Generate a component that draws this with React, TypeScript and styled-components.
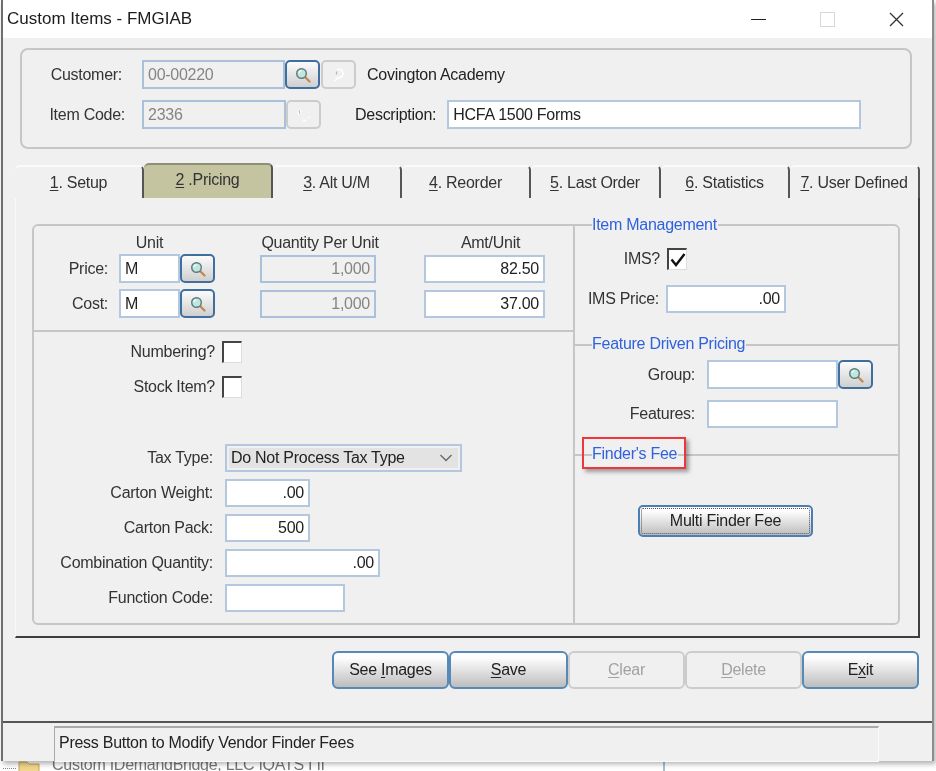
import React from "react";
import styled, { createGlobalStyle } from "styled-components";

const GlobalStyle = createGlobalStyle`
  html, body {
    margin: 0;
    padding: 0;
    background: #fff;
  }
  * {
    box-sizing: border-box;
  }
`;

const SearchIcon = () => (
  <svg width="18" height="18" viewBox="0 0 18 18">
    <line x1="10.5" y1="10.5" x2="15.5" y2="15.5" stroke="#c08a52" strokeWidth="2.4" strokeLinecap="round" />
    <circle cx="7.5" cy="7.500" r="4.800" fill="#bfe6e0" stroke="#5d7a7a" strokeWidth="1.400" />
    <path d="M5 7a3 3 0 0 1 2.500-2.400" fill="none" stroke="#fff" strokeWidth="1.200" />
  </svg>
);

const FadedSearchIcon = () => (
  <svg width="18" height="18" viewBox="0 0 18 18">
    <path d="M7 3.500a4.600 4.600 0 0 1 6 4.500 4.600 4.600 0 0 1-5 3.600M8 11.500 4.500 15" fill="none" stroke="#fff" strokeWidth="1.600" />
    <path d="M6.500 5.500v3" fill="none" stroke="#b5b5b5" strokeWidth="1.200" />
  </svg>
);

const FadedDots = () => (
  <svg width="18" height="18" viewBox="0 0 18 18">
    <path d="M4 5.500h3M3.500 6v2.500M13.500 11l1 1M8 14.500h3" fill="none" stroke="#fff" strokeWidth="1.500" />
    <path d="M4.500 4.500v3" fill="none" stroke="#b8b8b8" strokeWidth="1" />
  </svg>
);

const Chevron = () => (
  <svg width="14" height="8" viewBox="0 0 14 8">
    <path d="M1.500 1 7 6.500 12.500 1" fill="none" stroke="#666" strokeWidth="1.300" />
  </svg>
);

const FolderIcon = () => (
  <svg width="22" height="14" viewBox="0 0 22 14">
    <path d="M1 1h8l2 2h10v11H1z" fill="#f1d58c" stroke="#c9a65a" strokeWidth="1" />
  </svg>
);

const Page = styled.div`
  width: 936px;
  height: 771px;
  overflow: hidden;
  position: relative;
  background: #fff;
  font-family: "Liberation Sans", Arial, sans-serif;
  font-size: 16px;
  letter-spacing: -0.27px;
  color: #222;
  filter: blur(0.4px);
`;

const Window = styled.div`
  width: 933px;
  height: 761px;
  margin-left: 1px;
  border-left: 2px solid #6e6e6e;
  border-right: 2px solid #8c8c8c;
  background: #f0f0f0;
  display: flex;
  flex-direction: column;
  box-shadow: 2px 3px 5px rgba(0, 0, 0, 0.3);
  position: relative;
  z-index: 1;
`;

const TitleBar = styled.div`
  height: 38px;
  flex: none;
  background: #fff;
  display: flex;
  align-items: center;
  padding-left: 4px;
  font-size: 17px;
  letter-spacing: 0;
  color: #1c1c1c;
`;

const TitleText = styled.span`
  flex: 1;
`;

const WindowControl = styled.div`
  width: 15px;
  height: 15px;
  flex: none;
  display: flex;
  align-items: center;
  justify-content: center;
`;

const MinLine = styled(WindowControl)`
  margin-right: 54px;
  &::before {
    content: "";
    width: 15px;
    height: 1px;
    background: #222;
  }
`;

const MaxBox = styled(WindowControl)`
  margin-right: 54px;
  border: 1px solid #d8d8d8;
`;

const CloseBox = styled(WindowControl)`
  margin-right: 28px;
`;

const TopGroup = styled.div`
  margin: 10px 0 0 17px;
  width: 892px;
  height: 101px;
  flex: none;
  border: 2px solid #c6c6c6;
  border-radius: 8px;
  padding: 10px 0 0 0;
  display: flex;
  flex-direction: column;
  gap: 11px;
`;

const Row = styled.div<{ $labelWidth: number; $gap?: number }>`
  display: grid;
  grid-template-columns: ${(p) => p.$labelWidth}px auto;
  column-gap: ${(p) => p.$gap ?? 11}px;
  justify-content: start;
  align-items: center;
  min-height: 28px;
`;

const Label = styled.label`
  text-align: right;
  white-space: nowrap;
  color: #333;
`;

const Cluster = styled.div`
  display: flex;
  align-items: stretch;
`;

const Input = styled.input<{ $width: number; $right?: boolean; $off?: boolean }>`
  width: ${(p) => p.$width}px;
  height: 28px;
  flex: none;
  border: 2px solid ${(p) => (p.$off ? "#a9c1da" : "#b3c8de")};
  border-radius: 0;
  outline: none;
  background: ${(p) => (p.$off ? "#f0f0f0" : "#fff")};
  color: ${(p) => (p.$off ? "#858585" : "#222")};
  font: inherit;
  letter-spacing: inherit;
  padding: 0 4px;
  text-align: ${(p) => (p.$right ? "right" : "left")};
`;

const ClusterInput = styled(Input)`
  height: auto;
`;

const SearchButton = styled.button`
  width: 35px;
  height: 29px;
  flex: none;
  padding: 0;
  display: flex;
  align-items: center;
  justify-content: center;
  border: 2px solid #3f6f9f;
  border-radius: 5px;
  background: linear-gradient(#fbfbfb, #cfcfcf);
`;

const OffButton = styled.button<{ $flush?: boolean }>`
  width: 35px;
  height: 29px;
  flex: none;
  margin-left: ${(p) => (p.$flush ? 0 : 1)}px;
  padding: 0;
  display: flex;
  align-items: center;
  justify-content: center;
  border: 2px solid #cccccc;
  border-radius: 5px;
  background: #f0f0f0;
`;

const Plain = styled.span<{ $left: number }>`
  margin-left: ${(p) => p.$left}px;
  white-space: nowrap;
  display: flex;
  align-items: center;
`;

const DescriptionInput = styled(ClusterInput)`
  margin-left: 11px;
`;

const TabStrip = styled.div`
  display: flex;
  align-items: flex-end;
  height: 35px;
  flex: none;
  margin: 14px 0 0 12px;
`;

const Tab = styled.div<{ $active?: boolean; $width: number }>`
  width: ${(p) => p.$width}px;
  height: ${(p) => (p.$active ? 35 : 33)}px;
  flex: none;
  display: flex;
  align-items: center;
  justify-content: center;
  padding-top: ${(p) => (p.$active ? 0 : 1)}px;
  padding-bottom: ${(p) => (p.$active ? 4 : 0)}px;
  background: ${(p) => (p.$active ? "#c4c4a0" : "#f0f0f0")};
  border-top: 2px solid ${(p) => (p.$active ? "#8f8f78" : "#fafafa")};
  border-right: 2px solid #555;
  border-top-right-radius: 5px;
  border-top-left-radius: 5px;
  white-space: nowrap;
  color: #333;
`;

const TabPanel = styled.div`
  width: 905px;
  height: 440px;
  flex: none;
  margin-left: 12px;
  border-left: 1px solid #fafafa;
  border-right: 2px solid #3f3f3f;
  border-bottom: 2px solid #3f3f3f;
  padding: 26px 0 0 16px;
`;

const InnerGroup = styled.div`
  width: 868px;
  height: 401px;
  display: grid;
  grid-template-columns: 539px 325px;
  border: 2px solid #c6c6c6;
  border-radius: 6px;
`;

const LeftColumn = styled.div`
  display: flex;
  flex-direction: column;
`;

const PriceGrid = styled.div`
  height: 106px;
  flex: none;
  border-bottom: 2px solid #c6c6c6;
  display: grid;
  grid-template-columns: 85px 141px 164px 121px;
  grid-template-rows: 22px auto auto;
  align-content: start;
  padding-top: 6px;
  align-items: center;
`;

const PriceLabel = styled(Label)<{ $low?: boolean }>`
  padding-right: 11px;
  margin-top: ${(p) => (p.$low ? 6 : 0)}px;
`;

const ColumnHead = styled.div<{ $width: number; $shift?: number }>`
  width: ${(p) => p.$width}px;
  white-space: nowrap;
  color: #333;
  display: flex;
  justify-content: center;
  transform: translateX(${(p) => p.$shift ?? 0}px);
`;

const CostSlot = styled.div`
  margin-top: 6px;
`;

const FormStack = styled.div`
  padding-top: 9px;
  display: flex;
  flex-direction: column;
`;

const CheckRow = styled(Row)<{ $tail?: number }>`
  margin-bottom: ${(p) => p.$tail ?? 13}px;
  min-height: 22px;
`;

const FieldRows = styled.div`
  margin-top: 33px;
  display: flex;
  flex-direction: column;
  gap: 7px;
`;

const CheckBox = styled.div`
  width: 20px;
  height: 22px;
  background: #fff;
  border-top: 2px solid #444;
  border-left: 2px solid #444;
  border-right: 1px solid #ddd;
  border-bottom: 1px solid #ddd;
  display: flex;
  align-items: center;
  justify-content: center;
`;

const SelectBox = styled.div`
  width: 237px;
  height: 28px;
  border: 2px solid #b3c8de;
  padding: 2px;
  background: #f0f0f0;
`;

const SelectInner = styled.div`
  height: 100%;
  background: #e3e3e3;
  display: flex;
  align-items: center;
  justify-content: space-between;
  padding: 0 5px 0 2px;
  white-space: nowrap;
`;

const RightColumn = styled.div`
  border-left: 2px solid #c6c6c6;
  display: flex;
  flex-direction: column;
`;

const Section = styled.div<{ $height?: number; $first?: boolean }>`
  height: ${(p) => (p.$height ? `${p.$height}px` : "auto")};
  flex: ${(p) => (p.$height ? "none" : 1)};
  border-top: ${(p) => (p.$first ? "none" : "2px solid #c6c6c6")};
  display: flex;
  flex-direction: column;
`;

const Heading = styled.div<{ $first?: boolean }>`
  align-self: flex-start;
  position: relative;
  margin: ${(p) => (p.$first ? "-11px" : "-12px")} 0 0 17px;
  height: 20px;
  line-height: 20px;
  padding-right: 1px;
  background: #f0f0f0;
  color: #2f62dc;
  white-space: nowrap;
`;

const RedMark = styled.div`
  position: absolute;
  left: -10px;
  top: -7px;
  width: 104px;
  height: 32px;
  border: 2px solid #f0353b;
  box-shadow: 3px 3px 4px rgba(0, 0, 0, 0.35);
`;

const SectionBody = styled.div<{ $top: number; $gap: number }>`
  margin-top: ${(p) => p.$top}px;
  display: flex;
  flex-direction: column;
  gap: ${(p) => p.$gap}px;
`;

const ActionButton = styled.button<{ $off?: boolean; $width: number }>`
  width: ${(p) => p.$width}px;
  height: 38px;
  flex: none;
  padding: 0;
  font: inherit;
  letter-spacing: inherit;
  color: ${(p) => (p.$off ? "#a2a2a2" : "#222")};
  border: 2px solid ${(p) => (p.$off ? "#cccccc" : "#5688b8")};
  border-radius: 6px;
  background: ${(p) => (p.$off ? "#f0f0f0" : "linear-gradient(#fdfdfd 15%, #bdbdbd)")};
`;

const FinderButton = styled.button`
  width: 175px;
  height: 32px;
  margin: 41px 0 0 63px;
  padding: 1px;
  font: inherit;
  letter-spacing: inherit;
  color: #222;
  border: 2px solid #4b7fb3;
  border-radius: 5px;
  background: linear-gradient(#fdfdfd 15%, #bdbdbd);
  outline: 1px dotted #555;
  outline-offset: -4px;
`;

const ActionBar = styled.div`
  display: flex;
  flex: none;
  margin: 13px 0 0 329px;
`;

const StatusRow = styled.div`
  margin-top: 32px;
  flex: 1;
  border-top: 2px solid #555;
  padding: 3px 0 0 51px;
`;

const StatusField = styled.div`
  width: 825px;
  height: 36px;
  border-top: 2px solid #aaa;
  border-left: 1px solid #aaa;
  border-right: 1px solid #fafafa;
  border-bottom: 1px solid #fafafa;
  padding: 6px 0 0 4px;
  white-space: nowrap;
  color: #222;
`;

const BehindStrip = styled.div`
  height: 10px;
  display: flex;
  align-items: flex-start;
  overflow: hidden;
  padding-left: 3px;
  color: #777;
`;

const BehindDots = styled.div`
  width: 13px;
  height: 5px;
  margin: 3px 2px 0 0;
  border-bottom: 1px dotted #888;
`;

const BehindText = styled.span`
  margin: -5px 0 0 12px;
  line-height: 18px;
  white-space: nowrap;
  width: 611px;
`;

const BehindRule = styled.div`
  width: 2px;
  height: 10px;
  background: #a9bdd2;
`;

const Key = styled.u`
  text-underline-offset: 2px;
`;

const tabs = [
  { key: "1", rest: ". Setup", width: 129 },
  { key: "2", rest: " .Pricing", width: 129, active: true },
  { key: "3", rest: ". Alt U/M", width: 129 },
  { key: "4", rest: ". Reorder", width: 129 },
  { key: "5", rest: ". Last Order", width: 130 },
  { key: "6", rest: ". Statistics", width: 129 },
  { key: "7", rest: ". User Defined", width: 130 },
];

export default function App() {
  return (
    <Page>
      <GlobalStyle />
      <Window>
        <TitleBar>
          <TitleText>Custom Items - FMGIAB</TitleText>
          <MinLine />
          <MaxBox />
          <CloseBox>
            <svg width="15" height="15" viewBox="0 0 15 15">
              <path d="M1 1l13 13M14 1 1 14" stroke="#333" strokeWidth="1.300" />
            </svg>
          </CloseBox>
        </TitleBar>

        <TopGroup>
          <Row $labelWidth={100} $gap={20}>
            <Label>Customer:</Label>
            <Cluster>
              <ClusterInput $width={143} $off readOnly value="00-00220" />
              <SearchButton>
                <SearchIcon />
              </SearchButton>
              <OffButton>
                <FadedSearchIcon />
              </OffButton>
              <Plain $left={11}>Covington Academy</Plain>
            </Cluster>
          </Row>
          <Row $labelWidth={103} $gap={17}>
            <Label>Item Code:</Label>
            <Cluster>
              <ClusterInput $width={144} $off readOnly value="2336" />
              <OffButton $flush>
                <FadedDots />
              </OffButton>
              <Plain $left={34}>Description:</Plain>
              <DescriptionInput $width={414} readOnly value="HCFA 1500 Forms" />
            </Cluster>
          </Row>
        </TopGroup>

        <TabStrip>
          {tabs.map((t) => (
            <Tab key={t.key} $active={t.active} $width={t.width}>
              <span>
                <Key>{t.key}</Key>
                {t.rest}
              </span>
            </Tab>
          ))}
        </TabStrip>

        <TabPanel>
          <InnerGroup>
            <LeftColumn>
              <PriceGrid>
                <span />
                <ColumnHead $width={61}>Unit</ColumnHead>
                <ColumnHead $width={116} $shift={2}>Quantity Per Unit</ColumnHead>
                <ColumnHead $width={121} $shift={6}>Amt/Unit</ColumnHead>

                <PriceLabel>Price:</PriceLabel>
                <Cluster>
                  <ClusterInput $width={61} readOnly value="M" />
                  <SearchButton>
                    <SearchIcon />
                  </SearchButton>
                </Cluster>
                <Input $width={116} $off $right readOnly value="1,000" />
                <Input $width={121} $right readOnly value="82.50" />

                <PriceLabel $low>Cost:</PriceLabel>
                <CostSlot>
                  <Cluster>
                    <ClusterInput $width={61} readOnly value="M" />
                    <SearchButton>
                      <SearchIcon />
                    </SearchButton>
                  </Cluster>
                </CostSlot>
                <CostSlot>
                  <Input $width={116} $off $right readOnly value="1,000" />
                </CostSlot>
                <CostSlot>
                  <Input $width={121} $right readOnly value="37.00" />
                </CostSlot>
              </PriceGrid>

              <FormStack>
                <CheckRow $labelWidth={181} $gap={7}>
                  <Label>Numbering?</Label>
                  <CheckBox />
                </CheckRow>
                <CheckRow $labelWidth={181} $gap={7}>
                  <Label>Stock Item?</Label>
                  <CheckBox />
                </CheckRow>
                <FieldRows>
                  <Row $labelWidth={179} $gap={12}>
                    <Label>Tax Type:</Label>
                    <SelectBox>
                      <SelectInner>
                        Do Not Process Tax Type
                        <Chevron />
                      </SelectInner>
                    </SelectBox>
                  </Row>
                  <Row $labelWidth={179} $gap={12}>
                    <Label>Carton Weight:</Label>
                    <Input $width={85} $right readOnly value=".00" />
                  </Row>
                  <Row $labelWidth={179} $gap={12}>
                    <Label>Carton Pack:</Label>
                    <Input $width={85} $right readOnly value="500" />
                  </Row>
                  <Row $labelWidth={179} $gap={12}>
                    <Label>Combination Quantity:</Label>
                    <Input $width={155} $right readOnly value=".00" />
                  </Row>
                  <Row $labelWidth={179} $gap={12}>
                    <Label>Function Code:</Label>
                    <Input $width={120} readOnly value="" />
                  </Row>
                </FieldRows>
              </FormStack>
            </LeftColumn>

            <RightColumn>
              <Section $first $height={118}>
                <Heading $first>Item Management</Heading>
                <SectionBody $top={13} $gap={15}>
                  <CheckRow $labelWidth={85} $gap={7} $tail={0}>
                    <Label>IMS?</Label>
                    <CheckBox>
                      <svg width="16" height="16" viewBox="0 0 16 16">
                        <path d="M1.500 7.500 6 13 14.500 2" fill="none" stroke="#111" strokeWidth="2.400" />
                      </svg>
                    </CheckBox>
                  </CheckRow>
                  <Row $labelWidth={84} $gap={7}>
                    <Label>IMS Price:</Label>
                    <Input $width={120} $right readOnly value=".00" />
                  </Row>
                </SectionBody>
              </Section>
              <Section $height={110}>
                <Heading>Feature Driven Pricing</Heading>
                <SectionBody $top={6} $gap={11}>
                  <Row $labelWidth={120} $gap={12}>
                    <Label>Group:</Label>
                    <Cluster>
                      <ClusterInput $width={131} readOnly value="" />
                      <SearchButton>
                        <SearchIcon />
                      </SearchButton>
                    </Cluster>
                  </Row>
                  <Row $labelWidth={120} $gap={12}>
                    <Label>Features:</Label>
                    <Input $width={131} readOnly value="" />
                  </Row>
                </SectionBody>
              </Section>
              <Section>
                <Heading>
                  Finder's Fee
                  <RedMark />
                </Heading>
                <FinderButton>Multi Finder Fee</FinderButton>
              </Section>
            </RightColumn>
          </InnerGroup>
        </TabPanel>

        <ActionBar>
          <ActionButton $width={117}>
            See <Key>I</Key>mages
          </ActionButton>
          <ActionButton $width={119}>
            <Key>S</Key>ave
          </ActionButton>
          <ActionButton $off $width={117}>
            <Key>C</Key>lear
          </ActionButton>
          <ActionButton $off $width={117}>
            <Key>D</Key>elete
          </ActionButton>
          <ActionButton $width={117}>
            E<Key>x</Key>it
          </ActionButton>
        </ActionBar>

        <StatusRow>
          <StatusField>Press Button to Modify Vendor Finder Fees</StatusField>
        </StatusRow>
      </Window>
      <BehindStrip>
        <BehindDots />
        <FolderIcon />
        <BehindText>Custom IDemandBridge, LLC IQATS I II</BehindText>
        <BehindRule />
      </BehindStrip>
    </Page>
  );
}
